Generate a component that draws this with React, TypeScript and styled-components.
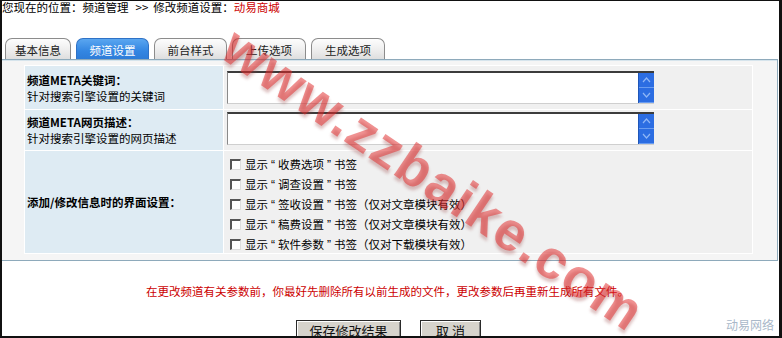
import React from 'react';
import styled, { createGlobalStyle } from 'styled-components';

const GlobalStyle = createGlobalStyle`
  body {
    margin: 0;
    background: #fff;
    font-family: "Noto Sans CJK SC", "Liberation Sans", sans-serif;
    font-size: 11.5px;
    color: #000;
  }
`;

const Frame = styled.div`
  position: relative;
  width: 782px;
  height: 338px;
  box-sizing: border-box;
  border: 2px solid #111;
  border-top-width: 1px;
  border-right-width: 3px;
  overflow: hidden;
  background: #fff;
`;

const Crumb = styled.div`
  height: 14px;
  line-height: 14px;
  margin-top: -1px;
  white-space: nowrap;
  span { color: #c00; }
  i { font-style: normal; margin: 0 5px 0 7px; }
`;

const TabRow = styled.div`
  display: flex;
  gap: 5px;
  margin-top: 24px;
  padding-left: 3px;
  height: 21px;
`;

const Tab = styled.div<{ $active?: boolean; $w: number }>`
  width: ${({ $w }) => $w}px;
  box-sizing: border-box;
  display: flex;
  align-items: center;
  justify-content: center;
  border: 1px solid ${({ $active }) => ($active ? '#2f72c6' : '#8c8c8c')};
  border-bottom: none;
  border-radius: 7px 7px 0 0;
  background: ${({ $active }) => ($active
    ? 'linear-gradient(#5aa6f0, #3386e2 60%, #2d7cd8)'
    : 'linear-gradient(#fdfdfd, #ececec 60%, #dedede)')};
  color: ${({ $active }) => ($active ? '#fff' : '#222')};
  padding-top: 1px;
`;

const Panel = styled.div`
  box-sizing: border-box;
  width: 776px;
  border: 1px solid #8eaabb;
  border-left: none;
  box-shadow: inset 0 1px 0 #d6e4ec;
  background: #f5f5f5;
  padding: 5px 24px 6px 22px;
`;

const Table = styled.div`
  display: grid;
  grid-template-columns: 198px 1fr;
  grid-template-rows: 43px 40px 102px;
  gap: 1px;
  padding: 1px;
  background: #fff;
`;

const LabelCell = styled.div`
  background: #deebf3;
  display: flex;
  flex-direction: column;
  justify-content: center;
  padding-left: 2px;
  line-height: 16px;
  b { font-weight: bold; }
`;

const FieldCell = styled.div<{ $top?: number }>`
  background: #f0f0f0;
  padding: ${({ $top }) => $top ?? 0}px 0 0 3px;
`;

const Area = styled.div`
  display: flex;
  width: 427px;
  height: 33px;
  box-sizing: border-box;
  border-top: 2px solid #3c3c3c;
  border-left: 1px solid #8a8a8a;
  border-bottom: 1px solid #cfcfcf;
  background: #fff;
`;

const AreaText = styled.div`
  flex: 1;
`;

const Scroll = styled.div`
  width: 15px;
  display: flex;
  flex-direction: column;
  background: #2c6de2;
  border-left: 1px solid #1f56b8;
`;

const ScrollBtn = styled.div`
  flex: 1;
  display: flex;
  align-items: center;
  justify-content: center;
  border-bottom: 1px solid #6a9cf0;
`;

const Checks = styled.div`
  display: flex;
  flex-direction: column;
  padding-top: 3px;
`;

const CheckRow = styled.div`
  display: flex;
  align-items: center;
  height: 20px;
  gap: 4px;
  padding-left: 3px;
  white-space: nowrap;
`;

const Quote = styled.span`
  font-family: "Liberation Sans", sans-serif;
  font-size: 12px;
  margin: 0 3px;
`;

const Box = styled.span`
  width: 11px;
  height: 11px;
  box-sizing: border-box;
  background: #fff;
  border-top: 2px solid #555;
  border-left: 2px solid #555;
  border-right: 1px solid #ddd;
  border-bottom: 1px solid #ddd;
`;

const Notice = styled.div`
  margin-top: 23px;
  text-align: center;
  color: #c00;
  line-height: 14px;
  padding-right: 6px;
`;

const Buttons = styled.div`
  display: flex;
  justify-content: center;
  gap: 19px;
  margin-top: 22px;
  padding-right: 4px;
`;

const Button = styled.button<{ $w: number }>`
  width: ${({ $w }) => $w}px;
  height: 22px;
  padding: 0 0 5px;
  line-height: 14px;
  border: 1px solid #2a2a2a;
  box-shadow: inset 1px 1px 0 #fff, inset -1px -1px 0 #888;
  background: #d6d3cc;
  font: inherit;
  font-size: 13px;
  color: #111;
`;

const Brand = styled.div`
  position: absolute;
  right: 5px;
  bottom: 3px;
  color: #a9b8c9;
  font-size: 12px;
`;

const Watermark = styled.div`
  position: absolute;
  left: 432px;
  top: 178px;
  width: 600px;
  text-align: center;
  transform: translate(-50%, -50%) rotate(34deg);
  font-family: "Liberation Sans", sans-serif;
  font-weight: bold;
  font-size: 55px;
  letter-spacing: 2px;
  color: rgba(226, 38, 38, 0.5);
  text-shadow: 2px 3px 3px rgba(150, 60, 60, 0.3);
  white-space: nowrap;
  pointer-events: none;
`;

const Arrow = ({ up }: { up?: boolean }) => (
  <svg width="9" height="6" viewBox="0 0 9 6">
    <path d={up ? 'M1 5 L4.5 1 L8 5' : 'M1 1 L4.5 5 L8 1'} fill="none" stroke="#8fb6f6" strokeWidth="1.2" />
  </svg>
);

const TextBox = () => (
  <Area>
    <AreaText />
    <Scroll>
      <ScrollBtn><Arrow up /></ScrollBtn>
      <ScrollBtn><Arrow /></ScrollBtn>
    </Scroll>
  </Area>
);

const tabs = [
  { name: '基本信息', w: 66 },
  { name: '频道设置', w: 73, active: true },
  { name: '前台样式', w: 73 },
  { name: '上传选项', w: 74 },
  { name: '生成选项', w: 74 },
];

const options = [
  { name: '收费选项', note: '' },
  { name: '调查设置', note: '' },
  { name: '签收设置', note: '（仅对文章模块有效）' },
  { name: '稿费设置', note: '（仅对文章模块有效）' },
  { name: '软件参数', note: '（仅对下载模块有效）' },
];

const App = (): JSX.Element => (
  <Frame>
    <GlobalStyle />
    <Crumb>您现在的位置：频道管理<i>&gt;&gt;</i>修改频道设置：<span>动易商城</span></Crumb>
    <TabRow>
      {tabs.map((t) => (
        <Tab key={t.name} $w={t.w} $active={t.active}>{t.name}</Tab>
      ))}
    </TabRow>
    <Panel>
      <Table>
        <LabelCell>
          <b>频道META关键词：</b>
          <span>针对搜索引擎设置的关键词</span>
        </LabelCell>
        <FieldCell $top={5}><TextBox /></FieldCell>
        <LabelCell>
          <b>频道META网页描述：</b>
          <span>针对搜索引擎设置的网页描述</span>
        </LabelCell>
        <FieldCell $top={2}><TextBox /></FieldCell>
        <LabelCell>
          <b>添加/修改信息时的界面设置：</b>
        </LabelCell>
        <FieldCell>
          <Checks>
            {options.map((o) => (
              <CheckRow key={o.name}>
                <Box />
                <span>显示<Quote>“</Quote>{o.name}<Quote>”</Quote>书签{o.note}</span>
              </CheckRow>
            ))}
          </Checks>
        </FieldCell>
      </Table>
    </Panel>
    <Notice>在更改频道有关参数前，你最好先删除所有以前生成的文件，更改参数后再重新生成所有文件。</Notice>
    <Buttons>
      <Button $w={105}>保存修改结果</Button>
      <Button $w={61}>取 消</Button>
    </Buttons>
    <Brand>动易网络</Brand>
    <Watermark>www.zzbaike.com</Watermark>
  </Frame>
);

export default App;
